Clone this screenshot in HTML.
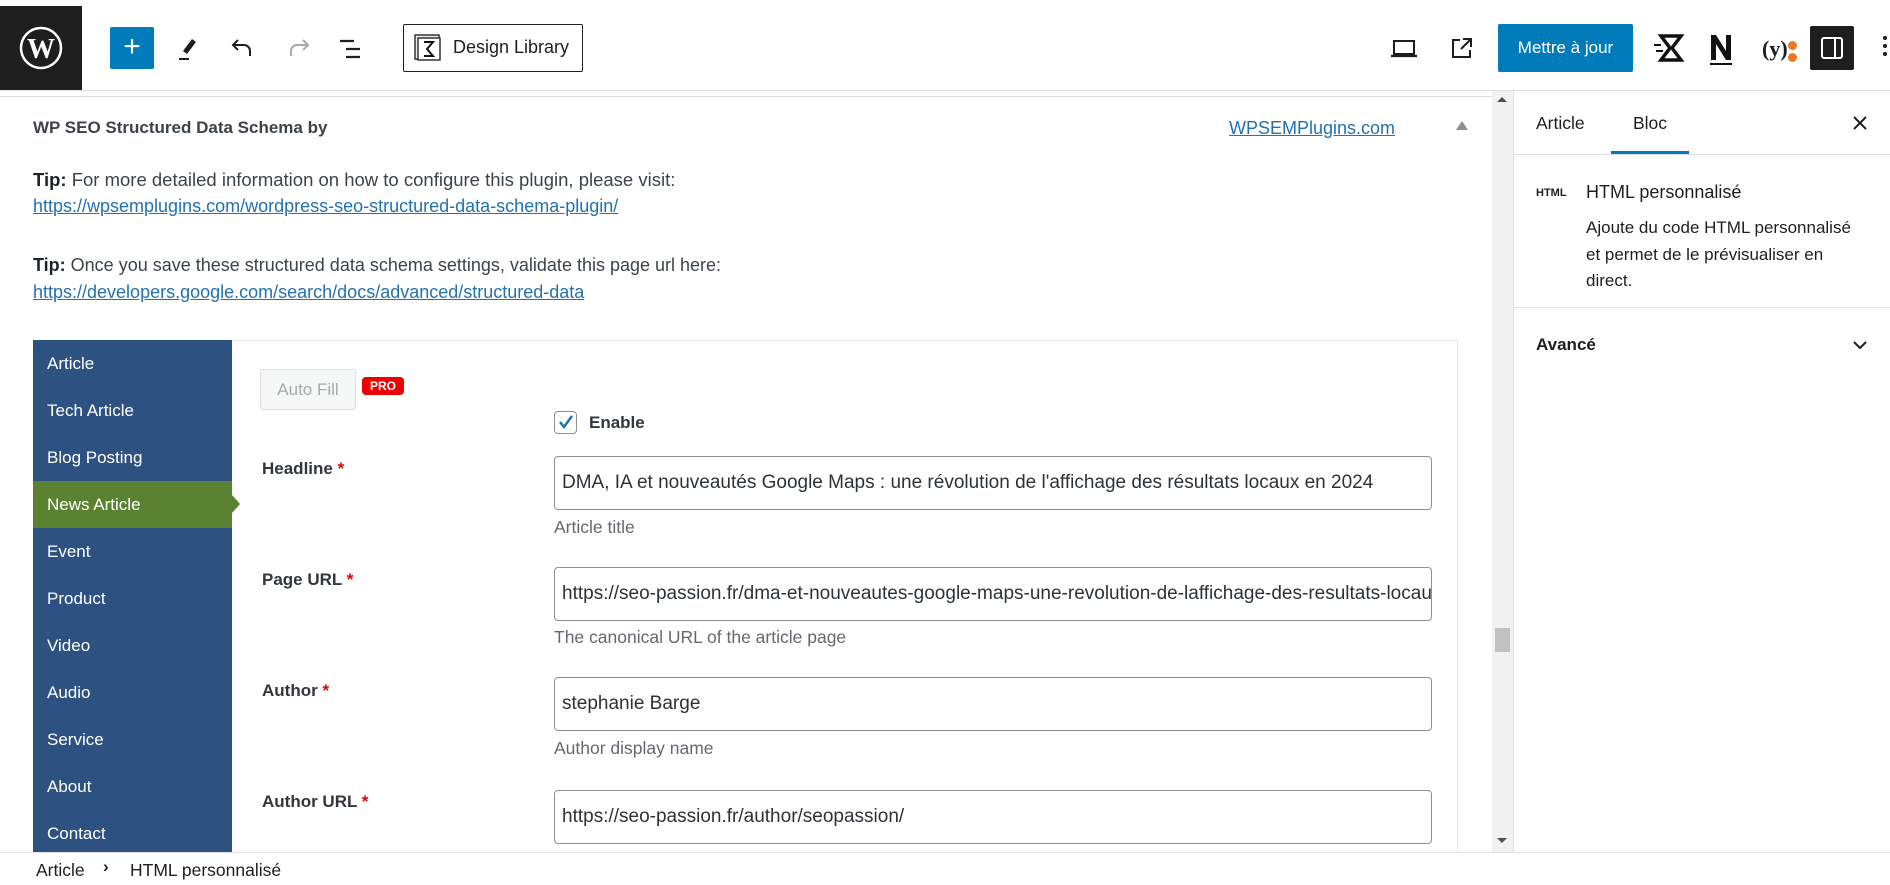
<!DOCTYPE html>
<html><head><meta charset="utf-8"><style>
*{box-sizing:border-box;margin:0;padding:0}
body{width:1890px;height:885px;overflow:hidden;background:#fff;font-family:"Liberation Sans",sans-serif;color:#1e1e1e;position:relative}
.a{position:absolute}
a{color:#2271b1;text-decoration:underline}
.t{font-size:18px;color:#3c434a;white-space:nowrap}
.nav div{height:47px;line-height:47px;padding-left:14px;color:#fff;font-size:17px}
.lbl{font-size:17px;font-weight:bold;color:#32373c}
.lbl span{color:#d00}
.inp{border:1px solid #8c8f94;border-radius:4px;height:54px;line-height:52px;padding-left:7px;font-size:19px;color:#2c3338;white-space:nowrap;overflow:hidden;width:878px;left:554px}
.help{font-size:17.5px;color:#646970;left:554px}
</style></head><body>
<!-- top bar -->
<div class="a" style="left:0;top:6px;width:82px;height:84px;background:#1e1e1e"></div>
<svg class="a" style="left:19px;top:26px" width="44" height="44" viewBox="0 0 44 44"><circle cx="22" cy="22" r="20" fill="none" stroke="#fff" stroke-width="2.5"/><text x="22" y="32" font-size="28" font-family="Liberation Serif" font-weight="bold" fill="#fff" text-anchor="middle">W</text></svg>
<div class="a" style="left:110px;top:27px;width:44px;height:42px;background:#007cba;border-radius:2px;color:#fff;font-size:30px;line-height:40px;text-align:center">+</div>
<svg class="a" style="left:176px;top:36px" width="24" height="26" viewBox="0 0 24 26"><path d="M16 3l4 3-9 12-4-3z" fill="#1e1e1e"/><path d="M3 23h10" stroke="#1e1e1e" stroke-width="2"/></svg>
<svg class="a" style="left:230px;top:36px" width="26" height="24" viewBox="0 0 26 24"><path d="M8 4L3 9l5 5M3 9h11a6 6 0 0 1 6 6v5" fill="none" stroke="#1e1e1e" stroke-width="2"/></svg>
<svg class="a" style="left:285px;top:36px" width="26" height="24" viewBox="0 0 26 24"><path d="M18 4l5 5-5 5M23 9H12a6 6 0 0 0-6 6v5" fill="none" stroke="#aaa" stroke-width="2"/></svg>
<svg class="a" style="left:338px;top:37px" width="28" height="24" viewBox="0 0 28 24"><path d="M2 4h14M8 12h14M8 20h14" stroke="#1e1e1e" stroke-width="2.2"/></svg>
<div class="a" style="left:403px;top:24px;width:180px;height:48px;border:1px solid #1e1e1e;border-radius:2px"></div>
<svg class="a" style="left:413px;top:33px" width="30" height="30" viewBox="0 0 30 30"><rect x="2" y="2" width="24" height="24" fill="#eee" stroke="#333" stroke-width="1.5"/><rect x="5" y="5" width="22" height="22" fill="#fff" stroke="#333" stroke-width="1.5"/><path d="M11 9h9l-6 7 6 7h-9" fill="none" stroke="#111" stroke-width="2"/></svg>
<div class="a" style="left:453px;top:37px;font-size:18px">Design Library</div>
<svg class="a" style="left:1390px;top:38px" width="28" height="22" viewBox="0 0 28 22"><rect x="4" y="3" width="20" height="13" fill="none" stroke="#1e1e1e" stroke-width="2"/><path d="M1 18h26" stroke="#1e1e1e" stroke-width="2.2"/></svg>
<svg class="a" style="left:1450px;top:36px" width="24" height="24" viewBox="0 0 24 24"><path d="M10 4H3v17h17v-7M13 3h8v8M21 3l-10 10" fill="none" stroke="#1e1e1e" stroke-width="2"/></svg>
<div class="a" style="left:1498px;top:24px;width:135px;height:48px;background:#007cba;border-radius:2px;color:#fff;font-size:17px;line-height:48px;text-align:center">Mettre à jour</div>
<svg class="a" style="left:1653px;top:33px" width="32" height="30" viewBox="0 0 32 30"><path d="M8 3h20l-9 12 9 12H8l9-12z" fill="none" stroke="#111" stroke-width="3.5"/><path d="M1 12h7M3 18h7" stroke="#111" stroke-width="2"/></svg>
<svg class="a" style="left:1708px;top:32px" width="26" height="34" viewBox="0 0 26 34"><path d="M3 28V3h5l10 16V3h5v25h-5L8 12v16z" fill="#111"/><path d="M2 32h22" stroke="#111" stroke-width="2"/></svg>
<div class="a" style="left:1762px;top:36px;font-size:22px;font-weight:bold;font-family:'Liberation Serif',serif">(y)</div>
<div class="a" style="left:1788px;top:41px;width:9px;height:9px;border-radius:50%;background:#ec7a22"></div>
<div class="a" style="left:1788px;top:53px;width:9px;height:9px;border-radius:50%;background:#ec7a22"></div>
<div class="a" style="left:1810px;top:26px;width:44px;height:44px;background:#1e1e1e;border-radius:2px"></div>
<svg class="a" style="left:1820px;top:36px" width="24" height="24" viewBox="0 0 24 24"><rect x="2" y="2" width="20" height="20" rx="2" fill="none" stroke="#fff" stroke-width="2"/><path d="M15 2v20" stroke="#fff" stroke-width="2"/></svg>
<div class="a" style="left:1883px;top:36px;width:4px;height:4px;background:#1e1e1e;border-radius:50%;box-shadow:0 8px 0 #1e1e1e,0 16px 0 #1e1e1e"></div>
<div class="a" style="left:0;top:90px;width:1890px;height:1px;background:#e0e0e0"></div>
<!-- editor -->
<div class="a" style="left:0;top:96px;width:1492px;height:1px;background:#ddd"></div>
<div class="a" style="left:33px;top:118px;font-size:17px;font-weight:bold;color:#3c434a">WP SEO Structured Data Schema by</div>
<div class="a" style="left:1229px;top:118px;font-size:18px"><a>WPSEMPlugins.com</a></div>
<div class="a" style="left:1456px;top:121px;width:0;height:0;border-left:6px solid transparent;border-right:6px solid transparent;border-bottom:9px solid #8c8f94"></div>
<div class="a t" style="left:33px;top:169px;font-size:18.5px"><b style="color:#1d2327">Tip:</b> For more detailed information on how to configure this plugin, please visit:</div>
<div class="a t" style="left:33px;top:196px"><a>https://wpsemplugins.com/wordpress-seo-structured-data-schema-plugin/</a></div>
<div class="a t" style="left:33px;top:255px"><b style="color:#1d2327">Tip:</b> Once you save these structured data schema settings, validate this page url here:</div>
<div class="a t" style="left:33px;top:282px"><a>https://developers.google.com/search/docs/advanced/structured-data</a></div>
<div class="a" style="left:33px;top:340px;width:1425px;height:520px;border:1px solid #e5e5e5"></div>
<div class="a nav" style="left:33px;top:340px;width:199px;height:512px;background:#2d5281">
<div>Article</div><div>Tech Article</div><div>Blog Posting</div><div style="background:#5b8230;position:relative">News Article<span style="position:absolute;right:-8px;top:14px;border-top:9px solid transparent;border-bottom:9px solid transparent;border-left:8px solid #5b8230"></span></div><div>Event</div><div>Product</div><div>Video</div><div>Audio</div><div>Service</div><div>About</div><div>Contact</div></div>
<div class="a" style="left:260px;top:369px;width:96px;height:41px;border:1px solid #ddd;border-radius:3px;background:#f6f7f7;color:#a7aaad;font-size:17px;line-height:39px;text-align:center">Auto Fill</div>
<div class="a" style="left:362px;top:377px;width:42px;height:18px;background:#e00;border-radius:4px;color:#fff;font-size:12px;font-weight:bold;line-height:18px;text-align:center">PRO</div>
<div class="a" style="left:554px;top:411px;width:23px;height:23px;border:1px solid #8c8f94;border-radius:4px"></div>
<svg class="a" style="left:557px;top:413px" width="18" height="18" viewBox="0 0 18 18"><path d="M3 9l4 5 8-11" fill="none" stroke="#2271b1" stroke-width="2.5"/></svg>
<div class="a lbl" style="left:589px;top:413px">Enable</div>
<div class="a lbl" style="left:262px;top:459px">Headline <span>*</span></div>
<div class="a inp" style="top:456px">DMA, IA et nouveautés Google Maps : une révolution de l'affichage des résultats locaux en 2024</div>
<div class="a help" style="top:517px">Article title</div>
<div class="a lbl" style="left:262px;top:570px">Page URL <span>*</span></div>
<div class="a inp" style="top:567px">https://seo-passion.fr/dma-et-nouveautes-google-maps-une-revolution-de-laffichage-des-resultats-locaux-en-2024/</div>
<div class="a help" style="top:627px">The canonical URL of the article page</div>
<div class="a lbl" style="left:262px;top:681px">Author <span>*</span></div>
<div class="a inp" style="top:677px">stephanie Barge</div>
<div class="a help" style="top:738px">Author display name</div>
<div class="a lbl" style="left:262px;top:792px">Author URL <span>*</span></div>
<div class="a inp" style="top:790px">https://seo-passion.fr/author/seopassion/</div>
<!-- scrollbar -->
<div class="a" style="left:1492px;top:91px;width:21px;height:761px;background:#f1f1f1"></div>
<div class="a" style="left:1497px;top:97px;border-left:5px solid transparent;border-right:5px solid transparent;border-bottom:5px solid #505050"></div>
<div class="a" style="left:1497px;top:838px;border-left:5px solid transparent;border-right:5px solid transparent;border-top:5px solid #505050"></div>
<div class="a" style="left:1495px;top:628px;width:15px;height:24px;background:#c1c1c1"></div>
<div class="a" style="left:1513px;top:91px;width:1px;height:761px;background:#e0e0e0"></div>
<!-- sidebar -->
<div class="a" style="left:1536px;top:113px;font-size:17.5px">Article</div>
<div class="a" style="left:1633px;top:113px;font-size:17.5px">Bloc</div>
<div class="a" style="left:1611px;top:151px;width:78px;height:3px;background:#007cba"></div>
<div class="a" style="left:1514px;top:154px;width:376px;height:1px;background:#e0e0e0"></div>
<svg class="a" style="left:1851px;top:114px" width="18" height="18" viewBox="0 0 18 18"><path d="M3 3l12 12M15 3L3 15" stroke="#1e1e1e" stroke-width="2"/></svg>
<div class="a" style="left:1536px;top:187px;font-size:11px;font-weight:bold">HTML</div>
<div class="a" style="left:1586px;top:182px;font-size:18px">HTML personnalisé</div>
<div class="a" style="left:1586px;top:215px;font-size:17px;line-height:26.5px;color:#1e1e1e;width:280px">Ajoute du code HTML personnalisé et permet de le prévisualiser en direct.</div>
<div class="a" style="left:1514px;top:307px;width:376px;height:1px;background:#e0e0e0"></div>
<div class="a" style="left:1536px;top:335px;font-size:17px;font-weight:bold">Avancé</div>
<svg class="a" style="left:1851px;top:338px" width="18" height="14" viewBox="0 0 18 14"><path d="M3 4l6 6 6-6" fill="none" stroke="#1e1e1e" stroke-width="2"/></svg>
<!-- bottom -->
<div class="a" style="left:0;top:852px;width:1890px;height:33px;background:#fff;border-top:1px solid #e0e0e0"></div>
<div class="a" style="left:36px;top:860px;font-size:17.5px">Article</div>
<div class="a" style="left:103px;top:857px;font-size:17px;font-weight:bold">›</div>
<div class="a" style="left:130px;top:860px;font-size:17.5px">HTML personnalisé</div>
</body></html>
